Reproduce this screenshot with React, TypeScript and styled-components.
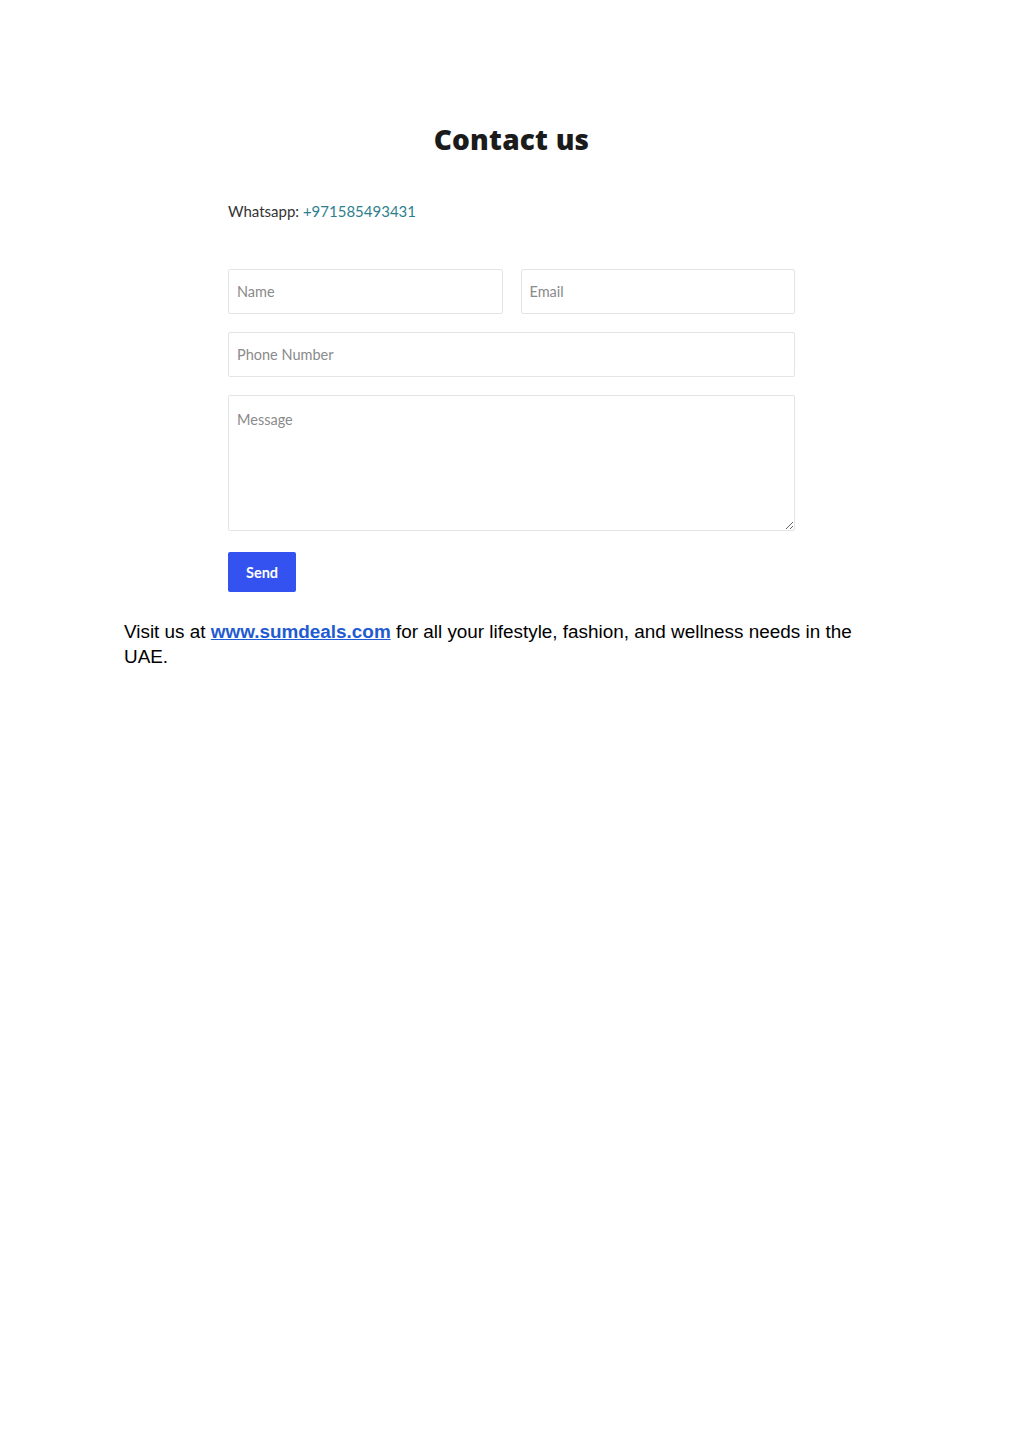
import { FC } from "react";
import styled, { createGlobalStyle } from "styled-components";

const GlobalStyle = createGlobalStyle`
    body {
        margin: 0;
        background: #ffffff;
    }
`;

const App: FC = () => {
    return (
        <Page>
            <GlobalStyle />
            <ContactSection>
                <Heading>Contact us</Heading>
                <WhatsappLine>
                    Whatsapp: <PhoneLink href="#">+971585493431</PhoneLink>
                </WhatsappLine>
                <ContactForm onSubmit={(event) => event.preventDefault()}>
                    <FieldRow>
                        <TextInput placeholder="Name" />
                        <TextInput placeholder="Email" type="email" />
                    </FieldRow>
                    <TextInput placeholder="Phone Number" />
                    <MessageInput placeholder="Message" />
                    <SendButton type="submit">Send</SendButton>
                </ContactForm>
            </ContactSection>
            <VisitText>
                Visit us at <SiteLink href="#">www.sumdeals.com</SiteLink> for all your lifestyle, fashion, and wellness needs in the UAE.
            </VisitText>
        </Page>
    );
};

export default App;

const Page = styled.div`
    width: 1024px;
    min-height: 1447px;
    padding-top: 118px;
    box-sizing: border-box;
`;

const ContactSection = styled.section`
    width: 567px;
    margin: 0 0 0 228px;
    display: flex;
    flex-direction: column;
`;

const Heading = styled.h1`
    margin: 0;
    text-align: center;
    font-family: "Open Sans", sans-serif;
    font-weight: 800;
    font-size: 28px;
    line-height: 42px;
    color: #1b1b1b;
    letter-spacing: 0.2px;
`;

const WhatsappLine = styled.p`
    margin: 41px 0 0;
    font-family: "Lato", sans-serif;
    font-size: 15px;
    line-height: 20px;
    color: #333333;
`;

const PhoneLink = styled.a`
    color: #2e7f8e;
    text-decoration: none;
`;

const ContactForm = styled.form`
    margin-top: 48px;
    display: flex;
    flex-direction: column;
    gap: 18px;
`;

const FieldRow = styled.div`
    display: grid;
    grid-template-columns: 1fr 1fr;
    gap: 18px;
`;

const inputBase = `
    box-sizing: border-box;
    width: 100%;
    border: 1px solid #e4e4e4;
    border-radius: 2px;
    padding: 0 8px;
    font-family: "Lato", sans-serif;
    font-size: 14.5px;
    color: #333333;
    background: #ffffff;
    outline: none;

    &::placeholder {
        color: #8a8a8a;
    }
`;

const TextInput = styled.input`
    ${inputBase}
    height: 45px;
`;

const MessageInput = styled.textarea`
    ${inputBase}
    height: 136px;
    padding-top: 15px;
    resize: vertical;
`;

const SendButton = styled.button`
    align-self: flex-start;
    margin-top: 3px;
    width: 68px;
    height: 40px;
    border: none;
    border-radius: 2px;
    background: #3352ef;
    color: #ffffff;
    font-family: "Lato", sans-serif;
    font-weight: 700;
    font-size: 14.5px;
    cursor: pointer;
`;

const VisitText = styled.p`
    margin: 27px 0 0;
    padding: 0 124px;
    font-family: "Liberation Sans", Arial, sans-serif;
    font-size: 18.9px;
    line-height: 25px;
    color: #000000;
`;

const SiteLink = styled.a`
    color: #1f5bd1;
    font-weight: 700;
    text-decoration: underline;
`;
